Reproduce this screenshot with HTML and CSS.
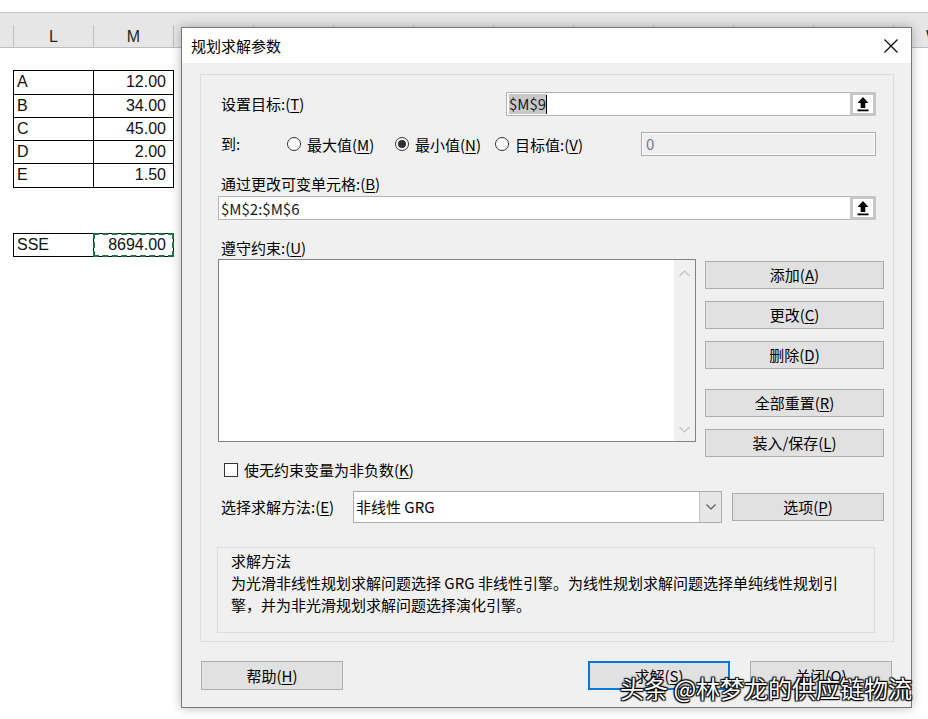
FILE: index.html
```html
<!DOCTYPE html>
<html lang="zh-CN">
<head>
<meta charset="utf-8">
<title>规划求解参数</title>
<link rel="stylesheet" href="styles.css">
</head>
<body>
<div class="sheet">
  <div class="colbar">
    <div class="col c0"></div>
    <div class="col">L</div>
    <div class="col">M</div>
    <div class="col">N</div>
    <div class="col">O</div>
    <div class="col">P</div>
    <div class="col">Q</div>
    <div class="col">R</div>
    <div class="col">S</div>
    <div class="col">T</div>
    <div class="col">U</div>
    <div class="col">V</div>
    <div class="col">W</div>
  </div>
  <div class="grid rows5">
    <div class="cell">A</div><div class="cell num">12.00</div>
    <div class="cell">B</div><div class="cell num">34.00</div>
    <div class="cell">C</div><div class="cell num">45.00</div>
    <div class="cell">D</div><div class="cell num">2.00</div>
    <div class="cell">E</div><div class="cell num">1.50</div>
  </div>
  <div class="grid rows1">
    <div class="cell">SSE</div><div class="cell num ants">8694.00</div>
  </div>
</div>

<div class="dialog">
  <div class="titlebar">
    <span class="title">规划求解参数</span>
    <svg class="close" width="14" height="14" viewBox="0 0 14 14"><path d="M0.5 0.5L13.5 13.5M13.5 0.5L0.5 13.5" stroke="#000" stroke-width="1.1" fill="none"/></svg>
  </div>
  <div class="body">
    <div class="group">
      <div class="row r-target">
        <span class="lbl w-target">设置目标:(<u>T</u>)</span>
        <div class="ref w-ref1">
          <span class="reftext"><span class="sel">$M$9</span><span class="caret"></span></span>
          <span class="pick"><svg width="14" height="16" viewBox="0 0 14 16"><path d="M7 1L12.5 7H9.3V12H4.7V7H1.5Z" fill="#000"/><rect x="1.5" y="13.5" width="11" height="1.8" fill="#000"/></svg></span>
        </div>
      </div>
      <div class="row r-to">
        <span class="lbl w-to">到:</span>
        <label class="radio w-r1"><span class="dot"></span>最大值(<u>M</u>)</label>
        <label class="radio w-r2"><span class="dot on"></span>最小值(<u>N</u>)</label>
        <label class="radio w-r3"><span class="dot"></span>目标值:(<u>V</u>)</label>
        <div class="disabled">0</div>
      </div>
      <div class="lbl r-label">通过更改可变单元格:(<u>B</u>)</div>
      <div class="ref w-ref2">
        <span class="reftext">$M$2:$M$6</span>
        <span class="pick"><svg width="14" height="16" viewBox="0 0 14 16"><path d="M7 1L12.5 7H9.3V12H4.7V7H1.5Z" fill="#000"/><rect x="1.5" y="13.5" width="11" height="1.8" fill="#000"/></svg></span>
      </div>
      <div class="lbl r-label">遵守约束:(<u>U</u>)</div>
      <div class="row r-cons">
        <div class="listbox">
          <div class="scroll">
            <svg width="11" height="7" viewBox="0 0 11 7"><path d="M0.5 6L5.5 1L10.5 6" stroke="#c2c2c2" stroke-width="1.2" fill="none"/></svg>
            <svg width="11" height="7" viewBox="0 0 11 7"><path d="M0.5 1L5.5 6L10.5 1" stroke="#c2c2c2" stroke-width="1.2" fill="none"/></svg>
          </div>
        </div>
        <div class="btncol">
          <button class="btn">添加(<u>A</u>)</button>
          <button class="btn">更改(<u>C</u>)</button>
          <button class="btn">删除(<u>D</u>)</button>
          <button class="btn gap-lg">全部重置(<u>R</u>)</button>
          <button class="btn">装入/保存(<u>L</u>)</button>
        </div>
      </div>
      <div class="row r-check">
        <span class="box"></span>
        <span class="lbl">使无约束变量为非负数(<u>K</u>)</span>
      </div>
      <div class="row r-method">
        <span class="lbl w-method">选择求解方法:(<u>E</u>)</span>
        <div class="select">
          <span class="seltext">非线性 GRG</span>
          <span class="drop"><svg width="10" height="6" viewBox="0 0 10 6"><path d="M0.5 0.5L5 5L9.5 0.5" stroke="#555" stroke-width="1.1" fill="none"/></svg></span>
        </div>
        <button class="btn opt">选项(<u>P</u>)</button>
      </div>
      <div class="desc">
        <div class="desc-title">求解方法</div>
        <div class="desc-line">为光滑非线性规划求解问题选择 GRG 非线性引擎。为线性规划求解问题选择单纯线性规划引</div>
        <div class="desc-line">擎，并为非光滑规划求解问题选择演化引擎。</div>
      </div>
    </div>
    <div class="footer">
      <button class="btn fbtn">帮助(<u>H</u>)</button>
      <div class="fright">
        <button class="btn fbtn default">求解(<u>S</u>)</button>
        <button class="btn fbtn">关闭(<u>O</u>)</button>
      </div>
    </div>
  </div>
</div>

<div class="watermark">头条 @林梦龙的供应链物流</div>
</body>
</html>
```

FILE: styles.css
```css
* { box-sizing: border-box; }
html, body { margin: 0; padding: 0; }
body {
  width: 928px;
  height: 719px;
  overflow: hidden;
  position: relative;
  background: #ffffff;
  font-family: "Noto Sans CJK SC", "Noto Sans", sans-serif;
  color: #000;
}

/* spreadsheet */
.sheet { padding-top: 12px; }
.colbar {
  height: 36px;
  border-top: 1px solid #c8c8c8;
  border-bottom: 1px solid #bcbcbc;
  background: #e6e6e6;
  display: flex;
  align-items: flex-end;
  overflow: hidden;
}
.col {
  flex: 0 0 80px;
  height: 22px;
  border-left: 1px solid #bdbdbd;
  text-align: center;
  line-height: 24px;
  font-family: "Liberation Sans", sans-serif;
  font-size: 16px;
  color: #262626;
}
.col.c0 { flex-basis: 13px; border-left: none; }

.grid {
  display: grid;
  grid-template-columns: 80px 80px;
  width: 161px;
  margin-left: 13px;
  border-top: 1px solid #000;
  border-left: 1px solid #000;
  font-family: "Liberation Sans", sans-serif;
  font-size: 16px;
  color: #111;
}
.rows5 { margin-top: 22px; grid-template-rows: 24px 23px 23px 23px 24px; }
.rows1 { margin-top: 45px; grid-template-rows: 23px; }
.cell {
  border-right: 1px solid #000;
  border-bottom: 1px solid #000;
  padding: 0 3px;
  line-height: 22px;
  white-space: nowrap;
}
.cell.num { text-align: right; padding-right: 7px; }
.ants { position: relative; }
.ants::after {
  content: "";
  position: absolute;
  left: -1px; top: -1px; right: -1px; bottom: -1px;
  border: 2px dashed #217346;
}

/* dialog */
.dialog {
  position: absolute;
  left: 181px;
  top: 27px;
  width: 731px;
  height: 681px;
  border: 1px solid #777;
  background: #f0f0f0;
  box-shadow: 0 0 10px rgba(0, 0, 0, 0.28);
  display: flex;
  flex-direction: column;
}
.titlebar {
  height: 35px;
  flex: 0 0 35px;
  background: #fff;
  display: flex;
  align-items: center;
  justify-content: space-between;
  padding: 0 13px 0 9px;
}
.title { font-size: 15px; }
.close { display: block; }

.body { padding: 11px 18px 0 18px; font-size: 15px; }
.group {
  height: 568px;
  border: 1px solid #dcdcdc;
  margin-right: -1px;
}
.row { display: flex; align-items: center; }
.lbl { white-space: nowrap; line-height: 18px; }
u { text-decoration: underline; text-underline-offset: 2px; }

.r-target { margin-top: 17px; height: 24px; padding-left: 20px; }
.w-target { width: 285px; }
.ref {
  height: 24px;
  background: #fff;
  border: 1px solid #b4b4b4;
  display: flex;
  align-items: stretch;
  justify-content: space-between;
}
.w-ref1 { width: 370px; }
.w-ref2 { width: 658px; margin-left: 17px; margin-top: 3px; }
.reftext {
  display: flex;
  align-items: center;
  padding-left: 2px;
  font-size: 15px;
  color: #1a1a1a;
}
.sel { background: #c8c8c8; line-height: 20px; }
.caret { display: inline-block; width: 1px; height: 19px; background: #000; }
.pick {
  width: 26px;
  margin: -1px -1px -1px 0;
  border: 3px solid #c6c6c6;
  background: #fff;
  display: flex;
  align-items: center;
  justify-content: center;
}
.pick svg { display: block; }

.r-to { margin-top: 16px; height: 24px; padding-left: 20px; }
.w-to { width: 66px; }
.radio { display: flex; align-items: center; white-space: nowrap; }
.w-r1 { width: 108px; }
.w-r2 { width: 100px; }
.w-r3 { width: 146px; }
.dot {
  width: 14px; height: 14px;
  border: 1px solid #333;
  border-radius: 50%;
  background: #fff;
  margin-right: 6px;
  display: flex;
  align-items: center;
  justify-content: center;
}
.dot.on::after {
  content: "";
  width: 8px; height: 8px;
  border-radius: 50%;
  background: #333;
}
.disabled {
  width: 235px;
  height: 24px;
  border: 1px solid #adadad;
  box-shadow: inset 0 0 0 1px #fafafa;
  background: #efefef;
  color: #777;
  font-size: 15px;
  padding-left: 4px;
  line-height: 22px;
}

.r-label { margin-top: 19px; height: 18px; padding-left: 20px; }

.r-cons { margin-top: 2px; align-items: flex-start; }
.listbox {
  margin-left: 17px;
  width: 478px;
  height: 183px;
  border: 1px solid #838383;
  background: #fff;
  display: flex;
  justify-content: flex-end;
}
.scroll {
  width: 21px;
  background: #f0f0f0;
  display: flex;
  flex-direction: column;
  justify-content: space-between;
  align-items: center;
  padding: 10px 0 8px;
}
.scroll svg { display: block; }
.btncol {
  margin-left: 9px;
  padding-top: 2px;
  width: 179px;
  display: flex;
  flex-direction: column;
  gap: 12px;
}
.btn {
  font-family: "Noto Sans CJK SC", "Noto Sans", sans-serif;
  font-size: 15px;
  color: #000;
  background: #e1e1e1;
  border: 1px solid #adadad;
  height: 28px;
  padding: 0;
  line-height: 26px;
  white-space: nowrap;
}
.btncol .btn { width: 179px; }
.btncol .gap-lg { margin-top: 8px; }

.r-check { margin-top: 4px; height: 18px; padding-left: 23px; }
.box {
  width: 14px; height: 14px;
  border: 1px solid #333;
  background: #fff;
  margin-right: 6px;
}

.r-method { margin-top: 12px; height: 32px; padding-left: 20px; align-items: center; }
.w-method { width: 132px; }
.select {
  width: 369px;
  height: 32px;
  background: #fff;
  border: 1px solid #adadad;
  display: flex;
  justify-content: space-between;
  align-items: stretch;
}
.seltext { padding-left: 2px; line-height: 30px; font-size: 15px; }
.drop {
  width: 22px;
  background: #e6e6e6;
  border-left: 1px solid #c4c4c4;
  display: flex;
  align-items: center;
  justify-content: center;
}
.btn.opt { margin-left: 10px; width: 152px; }

.desc {
  margin-top: 24px;
  margin-left: 16px;
  width: 658px;
  height: 86px;
  border: 1px solid #dcdcdc;
  padding: 2px 0 0 13px;
}
.desc-title, .desc-line { line-height: 22px; white-space: nowrap; }

.footer {
  margin-top: 19px;
  display: flex;
  justify-content: space-between;
  padding-left: 1px;
  margin-right: 1px;
}
.fright { display: flex; gap: 20px; }
.fbtn { width: 142px; height: 29px; }
.fbtn.default { border: 2px solid #0078d7; line-height: 25px; }

.watermark {
  position: absolute;
  left: 620px;
  top: 670px;
  font-family: "Noto Sans CJK SC", sans-serif;
  font-size: 24px;
  color: #fff;
  white-space: nowrap;
  text-shadow: 0 0 2px #000, 1px 1px 1px #000, -1px -1px 1px #000, 1px -1px 1px #000, -1px 1px 1px #000;
}
```
